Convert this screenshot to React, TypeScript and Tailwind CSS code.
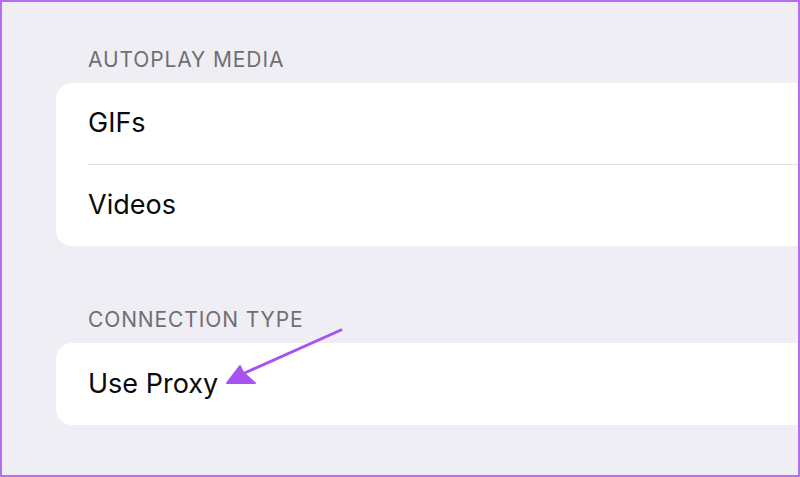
import React from 'react';

function SectionHeader({ title, className }: { title: string; className?: string }) {
  return (
    <div className={`pl-[86px] text-[21px] leading-6 tracking-[0.042em] text-[#6e6e73] ${className ?? ''}`}>
      {title}
    </div>
  );
}

function Row({ label, divider }: { label: string; divider?: boolean }) {
  return (
    <div className="pl-8">
      <div className={`flex h-[81px] items-center text-[27px] text-[#0a0a0a] ${divider ? 'border-b border-[#e1e1e5] h-[82px]' : ''}`}>
        {label}
      </div>
    </div>
  );
}

export default function App() {
  return (
    <div
      className="relative h-[477px] w-[800px] overflow-hidden border-2 border-[#b36ef2] bg-[#efeef4]"
      style={{ fontFamily: 'Inter, "Noto Sans", sans-serif' }}
    >
      <SectionHeader title="AUTOPLAY MEDIA" className="mt-[46px]" />
      <div className="ml-[54px] mt-[11px] rounded-l-2xl bg-white">
        <Row label="GIFs" divider />
        <Row label="Videos" />
      </div>

      <SectionHeader title="CONNECTION TYPE" className="mt-[62px]" />
      <div className="ml-[54px] mt-[11px] rounded-l-2xl bg-white">
        <div className="pl-8">
          <div className="flex h-[82px] items-center text-[27px] text-[#0a0a0a]">Use Proxy</div>
        </div>
      </div>

      {/* annotation arrow, page coordinates */}
      <svg className="pointer-events-none absolute left-0 top-0" width="800" height="477" viewBox="2 2 800 477">
        <line x1="341" y1="330" x2="238" y2="376" stroke="#a654f1" strokeWidth="3" strokeLinecap="round" />
        <path d="M227 383 L240 366 Q242 372 247 376 Q251 380 255 383 Z" fill="#a654f1" stroke="#a654f1" strokeWidth="2" strokeLinejoin="round" />
      </svg>
    </div>
  );
}
